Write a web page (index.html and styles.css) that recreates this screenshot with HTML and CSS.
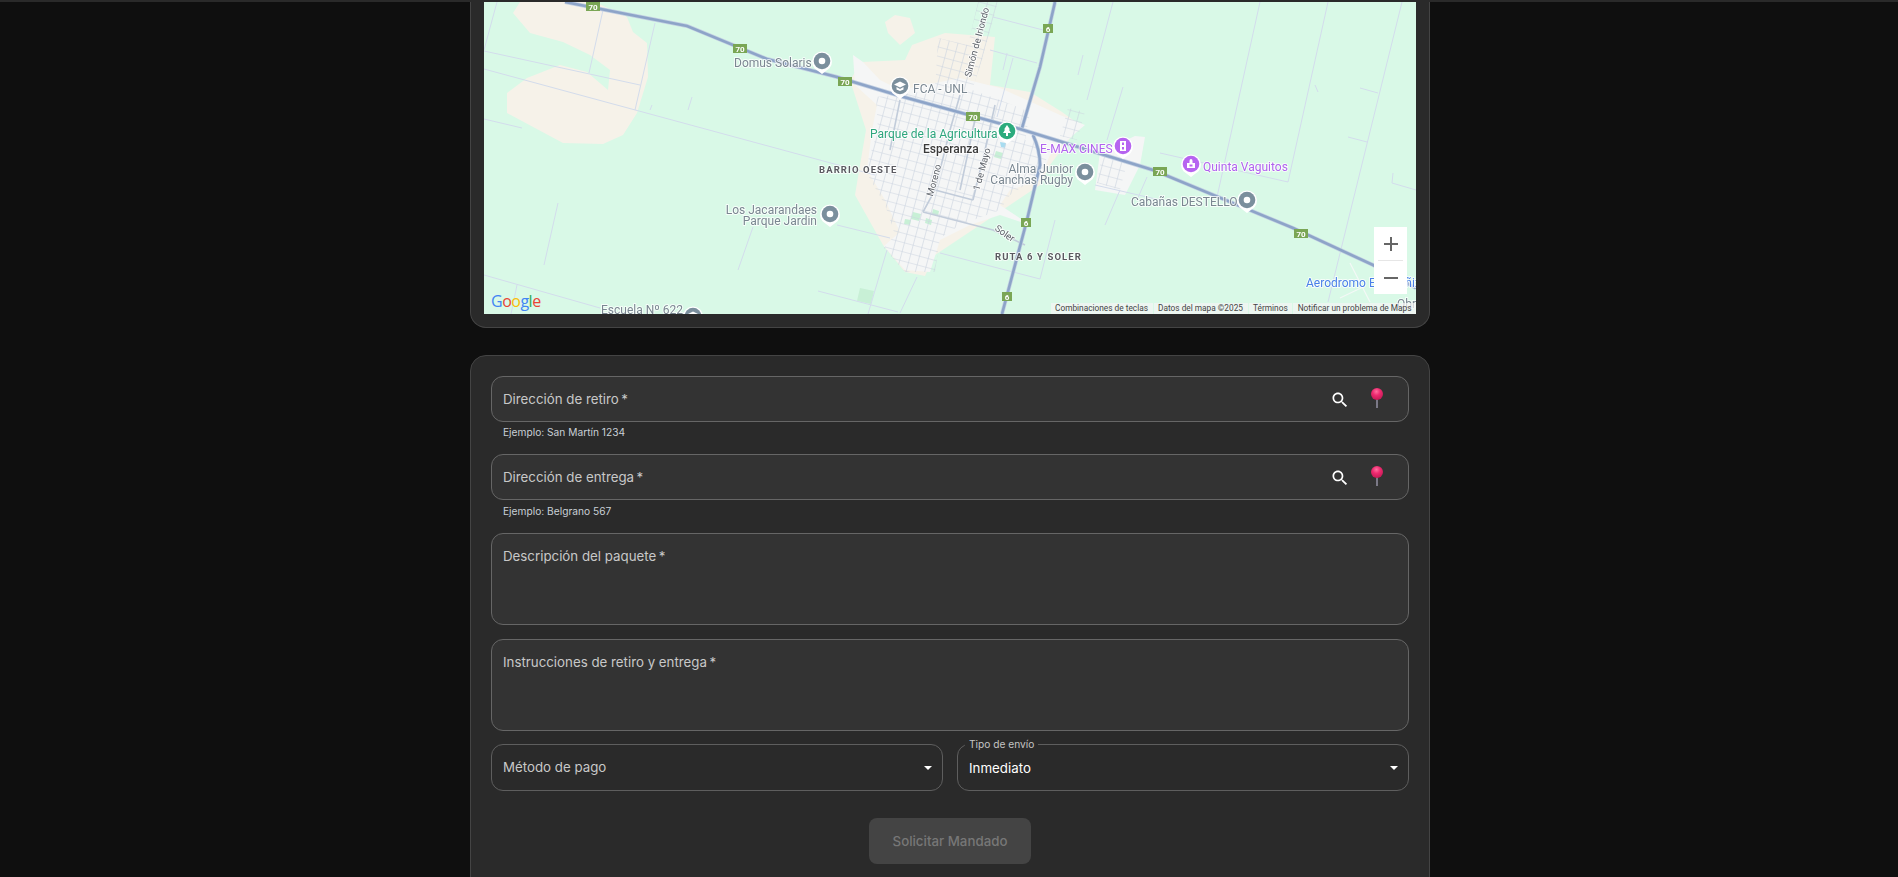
FILE: index.html
```html
<!DOCTYPE html>
<html lang="es">
<head>
    <meta charset="UTF-8">
    <title>Solicitar Mandado</title>
    <link rel="stylesheet" href="styles.css">
</head>
<body>
    <div class="top-line"></div>
    <main class="page">
        <!-- Mapa -->
        <section class="card map-card">
            <div class="map">
                <svg class="map-svg" viewBox="484 2 932 312" width="932" height="312">
                    <defs>
                        <pattern id="streets" width="9" height="9" patternUnits="userSpaceOnUse" patternTransform="rotate(15)">
                            <path d="M0 0H9M0 0V9" class="grid-line"/>
                        </pattern>
                        <symbol id="pin" viewBox="-11 -11 22 26" overflow="visible">
                            <path d="M0 13 L-7.5 7.2 A10 10 0 1 1 7.5 7.2 Z" fill="#fff"/>
                        </symbol>
                    </defs>

                    <!-- zonas -->
                    <path class="beige" d="M513,13 L520,2 L595,2 L627,17 L633,32 L647,43 L648,77 L637,113 L623,135 L603,144 L563,143 L507,113 L507,93 L527,78 L560,65 L587,72 L608,90 L610,70 L590,55 L563,42 L530,33 Z"/>
                    <path class="beige" d="M885,22 L895,15 L910,18 L915,33 L900,45 L888,33 Z"/>
                    <path class="beige" d="M850,80 L862,62 L905,60 L912,45 L945,33 L995,37 L990,85 L1030,92 L1062,112 L1080,125 L1050,165 L1040,185 L1010,205 L965,235 L935,255 L925,276 L905,272 L883,245 L855,195 L860,165 L866,130 Z"/>
                    <path class="urban" d="M853,55 L863,62 L880,80 L900,90 L960,78 L1000,88 L1060,115 L1085,125 L1050,155 L1040,180 L1010,190 L1000,205 L1030,225 L1000,215 L970,225 L940,240 L930,272 L905,270 L884,246 L900,232 L885,200 L867,170 L872,130 L877,105 L855,85 Z"/>
                    <path class="urban" d="M1100,152 L1135,136 L1145,137 L1140,165 L1125,195 L1095,190 Z"/>
                    <path class="park" d="M860,288 L874,291 L871,304 L857,301 Z"/>
                    <path class="park" d="M913,212 L921,214 L919,221 L911,219 Z M905,219 L911,220 L910,225 L904,224 Z M926,218 L932,220 L931,225 L925,223 Z M933,209 L939,211 L938,216 L932,214 Z M996,151 L1003,153 L1001,159 L994,157 Z"/>
                    <path class="water" d="M1000,142 L1006,143 L1005,148 L1001,147 Z"/>

                    <!-- caminos rurales -->
                    <path class="field" d="M497,2 L484,50 M484,51 L640,85 M603,10 L589,73 M655,23 L635,110 M484,69 L875,175 M484,119 L522,128 M558,203 L544,265 M484,275 L600,308 M517,285 L511,314 M753,227 L738,270 M837,225 L890,238 M887,250 L868,314 M818,291 L898,312 M917,277 L900,313 M692,97 L688,110 M652,105 L650,110 M1113,2 L1087,100 M1083,55 L1078,75 M1123,87 L1107,140 M1260,2 L1217,197 M1328,2 L1288,182 M1402,2 L1328,302 M1160,153 L1288,182 M1360,88 L1378,93 M1348,137 L1367,142 M1393,173 L1392,183 L1416,190 M1147,177 L1137,200 M993,17 L1043,30 M990,50 L1037,63 M1007,53 L1003,70 M1013,58 L997,117 M940,253 L1040,279 L1055,220 M1095,185 L1160,200 M1120,190 L1105,225 M1315,85 L1318,92"/>
                    <path class="field-white" d="M1350,263 L1370,302 M1340,298 L1363,287"/>

                    <!-- grilla de calles -->
                    <path class="grid" d="M876,97 L935,90 L938,38 L968,45 L978,2 L998,2 L982,60 L972,90 L1000,100 L1030,112 L1025,140 L1052,145 L1040,175 L1010,195 L1000,210 L960,225 L940,238 L935,272 L905,272 L884,248 L895,235 L885,205 L865,170 L878,130 Z"/>
                    <path class="grid" d="M1102,155 L1127,163 L1120,190 L1097,183 Z"/>
                    <path class="grid" d="M1068,108 L1085,112 L1077,140 L1060,136 Z"/>
                    <path class="street" d="M923,212 L935,190 L950,130 L960,95 M973,200 L985,150 L995,105 M960,190 L975,120 M923,212 L993,230 L1025,245 M935,190 L973,200 M900,100 L890,150"/>

                    <!-- rutas -->
                    <path class="road-edge" d="M1055,2 L1040,67 L1022,128"/>
                    <path class="road" d="M1055,2 L1040,67 L1022,128"/>
                    <path class="road-edge" d="M1033,135 Q1040,150 1040,165 L1027,220 L1002,314"/>
                    <path class="road" d="M1033,135 Q1040,150 1040,165 L1027,220 L1002,314"/>
                    <path class="road-edge" d="M565,2 L687,26 L767,59 L837,77 L900,96 L940,107 L1020,129 L1153,170 L1293,228 L1373,265 L1416,288"/>
                    <path class="road" d="M565,2 L687,26 L767,59 L837,77 L900,96 L940,107 L1020,129 L1153,170 L1293,228 L1373,265 L1416,288"/>

                    <!-- escudos -->
                    <g class="shield"><rect x="586" y="2" width="14" height="9"/><text x="593" y="9.5">70</text></g>
                    <g class="shield"><rect x="733" y="44" width="14" height="9"/><text x="740" y="51.5">70</text></g>
                    <g class="shield"><rect x="838" y="77" width="14" height="9"/><text x="845" y="84.5">70</text></g>
                    <g class="shield"><rect x="966" y="112" width="14" height="9"/><text x="973" y="119.5">70</text></g>
                    <g class="shield"><rect x="1153" y="167" width="14" height="9"/><text x="1160" y="174.5">70</text></g>
                    <g class="shield"><rect x="1294" y="229" width="14" height="9"/><text x="1301" y="236.5">70</text></g>
                    <g class="shield"><rect x="1043" y="24" width="10" height="9"/><text x="1048" y="31.5">6</text></g>
                    <g class="shield"><rect x="1021" y="218" width="10" height="9"/><text x="1026" y="225.5">6</text></g>
                    <g class="shield"><rect x="1002" y="292" width="10" height="9"/><text x="1007" y="299.5">6</text></g>

                    <!-- nombres -->
                    <text class="lbl gray" x="734" y="66.5">Domus Solaris</text>
                    <text class="lbl gray" x="913" y="92.5">FCA - UNL</text>
                    <text class="lbl green" x="870" y="137.5">Parque de la Agricultura</text>
                    <text class="lbl city" x="923" y="152.5">Esperanza</text>
                    <text class="lbl area" x="819" y="173">BARRIO OESTE</text>
                    <text class="lbl area" x="995" y="260">RUTA 6 Y SOLER</text>
                    <text class="lbl gray end" x="817" y="213.5">Los Jacarandaes</text>
                    <text class="lbl gray end" x="817" y="225">Parque Jardin</text>
                    <text class="lbl gray" x="601" y="314">Escuela Nº 622</text>
                    <text class="lbl purple" x="1040" y="153">E-MAX CINES</text>
                    <text class="lbl purple" x="1203" y="171">Quinta Vaguitos</text>
                    <text class="lbl gray end" x="1073" y="172.5">Alma Junior</text>
                    <text class="lbl gray end" x="1073" y="184">Canchas Rugby</text>
                    <text class="lbl gray" x="1131" y="205.5">Cabañas DESTELLO</text>
                    <text class="lbl blue" x="1306" y="287">Aerodromo Esperañiz</text>
                    <text class="lbl gray" x="1397" y="308">Obras</text>
                    <text class="lbl street-name" transform="translate(937,181) rotate(-75)">Moreno</text>
                    <text class="lbl street-name" transform="translate(985,170) rotate(-75)">1 de Mayo</text>
                    <text class="lbl street-name" transform="translate(980,43) rotate(-75)">Simón de Iriondo</text>
                    <text class="lbl street-name" transform="translate(1003,236) rotate(35)">Soler</text>

                    <!-- pines -->
                    <g transform="translate(822,61)"><use href="#pin" x="-11" y="-11" width="22" height="26"/><circle r="8.3" class="p-gray"/><circle r="3.3" fill="#fff"/></g>
                    <g transform="translate(900,86)"><use href="#pin" x="-11" y="-11" width="22" height="26"/><circle r="8.3" class="p-gray"/><path d="M0,-4.5 L6,-1.5 L0,1.5 L-6,-1.5 Z M-3.5,1 L0,3 L3.5,1 V3.5 L0,5 L-3.5,3.5 Z" fill="#fff"/></g>
                    <g transform="translate(1007,131)"><use href="#pin" x="-11" y="-11" width="22" height="26"/><circle r="8.3" class="p-green"/><path d="M0,-6 L3,-1.5 H1.8 L4,2 H1 V5 H-1 V2 H-4 L-1.8,-1.5 H-3 Z" fill="#fff"/></g>
                    <g transform="translate(1123,146)"><use href="#pin" x="-11" y="-11" width="22" height="26"/><circle r="8.3" class="p-purple"/><path d="M-3,-5 H3 V5 H-3 Z" fill="#fff"/><path d="M-1,-3.5 H1 V-1 H-1 Z M-1,1 H1 V3.5 H-1 Z" class="p-purple"/></g>
                    <g transform="translate(1191,164)"><use href="#pin" x="-11" y="-11" width="22" height="26"/><circle r="8.3" class="p-purple"/><path d="M-4,-1 H-1.5 V-3 A1.5,2 0 0 1 1.5,-3 V-1 H4 V4 H-4 Z M-1.5,0.5 V2.5 H1.5 V0.5 Z" fill="#fff" fill-rule="evenodd"/></g>
                    <g transform="translate(1085,172)"><use href="#pin" x="-11" y="-11" width="22" height="26"/><circle r="8.3" class="p-gray"/><circle r="3.3" fill="#fff"/></g>
                    <g transform="translate(1247,200)"><use href="#pin" x="-11" y="-11" width="22" height="26"/><circle r="8.3" class="p-gray"/><circle r="3.3" fill="#fff"/></g>
                    <g transform="translate(830,214)"><use href="#pin" x="-11" y="-11" width="22" height="26"/><circle r="8.3" class="p-gray"/><circle r="3.3" fill="#fff"/></g>
                    <g transform="translate(693,316)"><use href="#pin" x="-11" y="-11" width="22" height="26"/><circle r="8.3" class="p-gray"/><path d="M0,-4.5 L6,-1.5 L0,1.5 L-6,-1.5 Z" fill="#fff"/></g>
                </svg>

                <div class="google-logo"><span class="g-blue">G</span><span class="g-red">o</span><span class="g-yellow">o</span><span class="g-blue">g</span><span class="g-green">l</span><span class="g-red">e</span></div>

                <div class="zoom-control">
                    <button class="zoom-btn" type="button"><svg width="18" height="18" viewBox="0 0 18 18"><path d="M9 2V16M2 9H16"/></svg></button>
                    <div class="zoom-sep"></div>
                    <button class="zoom-btn" type="button"><svg width="18" height="18" viewBox="0 0 18 18"><path d="M2 9H16"/></svg></button>
                </div>

                <div class="map-footer">
                    <span>Combinaciones de teclas</span>
                    <span>Datos del mapa ©2025</span>
                    <span>Términos</span>
                    <span>Notificar un problema de Maps</span>
                </div>
            </div>
        </section>

        <!-- Formulario -->
        <section class="card form-card">
            <div class="field-box">
                <span class="field-label">Dirección de retiro&thinsp;*</span>
                <svg class="icon-search" width="20" height="20" viewBox="0 0 24 24"><path d="M15.5 14h-.79l-.28-.27C15.41 12.59 16 11.11 16 9.5 16 5.91 13.09 3 9.5 3S3 5.91 3 9.5 5.91 16 9.5 16c1.61 0 3.09-.59 4.23-1.57l.27.28v.79l5 4.99L20.49 19l-4.99-5zm-6 0C7.01 14 5 11.99 5 9.5S7.01 5 9.5 5 14 7.01 14 9.5 11.99 14 9.5 14z"/></svg>
                <svg class="icon-pin" width="16" height="20" viewBox="0 0 16 20"><use href="#pushpin"/></svg>
            </div>
            <p class="helper">Ejemplo: San Martín 1234</p>

            <div class="field-box">
                <span class="field-label">Dirección de entrega&thinsp;*</span>
                <svg class="icon-search" width="20" height="20" viewBox="0 0 24 24"><path d="M15.5 14h-.79l-.28-.27C15.41 12.59 16 11.11 16 9.5 16 5.91 13.09 3 9.5 3S3 5.91 3 9.5 5.91 16 9.5 16c1.61 0 3.09-.59 4.23-1.57l.27.28v.79l5 4.99L20.49 19l-4.99-5zm-6 0C7.01 14 5 11.99 5 9.5S7.01 5 9.5 5 14 7.01 14 9.5 11.99 14 9.5 14z"/></svg>
                <svg class="icon-pin" width="16" height="20" viewBox="0 0 16 20"><use href="#pushpin"/></svg>
            </div>
            <p class="helper helper-last">Ejemplo: Belgrano 567</p>

            <div class="field-box area-box">
                <span class="field-label">Descripción del paquete&thinsp;*</span>
            </div>
            <div class="field-box area-box">
                <span class="field-label">Instrucciones de retiro y entrega&thinsp;*</span>
            </div>

            <div class="select-row">
                <div class="select-box">
                    <span class="field-label">Método de pago</span>
                    <span class="arrow"></span>
                </div>
                <div class="select-box">
                    <span class="select-legend">Tipo de envío</span>
                    <span class="select-value">Inmediato</span>
                    <span class="arrow"></span>
                </div>
            </div>

            <div class="actions">
                <button class="submit" type="button" disabled>Solicitar Mandado</button>
            </div>
        </section>
    </main>

    <!-- chincheta compartida -->
    <svg width="0" height="0" class="defs">
        <defs>
            <radialGradient id="ball" cx="45%" cy="30%" r="70%">
                <stop offset="0" stop-color="#ff6f9f"/>
                <stop offset="0.45" stop-color="#ee2a70"/>
                <stop offset="1" stop-color="#c41a55"/>
            </radialGradient>
            <g id="pushpin">
                <rect x="7.2" y="10" width="1.6" height="10" fill="#8d8a9c"/>
                <circle cx="8" cy="6" r="6" fill="url(#ball)"/>
            </g>
        </defs>
    </svg>
</body>
</html>
```

FILE: styles.css
```css
* {
    box-sizing: border-box;
}
html, body {
    height: 877px;
    overflow: hidden;
}
body {
    margin: 0;
    padding-left: 2px;
    background-color: #0f0f0f;
    font-family: Inter, "Noto Sans", sans-serif;
    color: #fff;
}
.top-line {
    height: 2px;
    margin-left: -2px;
    background-color: #2a2a2a;
}
.page {
    width: 960px;
    margin: 0 auto;
}
.defs {
    position: absolute;
}

/* Cards */
.card {
    background-color: #2a2a2a;
    border: 1px solid #444;
}
.map-card {
    padding: 0 13px 13px;
    border-top: none;
    border-radius: 0 0 16px 16px;
}
.form-card {
    margin-top: 27px;
    padding: 20px 20px 30px;
    border-radius: 16px;
}

/* Map */
.map {
    position: relative;
    height: 312px;
    overflow: hidden;
    background-color: #d9f9e7;
}
.map-svg {
    display: block;
    filter: blur(0.35px);
    font-family: Roboto, sans-serif;
}
.beige { fill: #f6f2e9; }
.urban { fill: #f5f6f6; }
.park { fill: #c8f0d6; }
.water { fill: #a8dcf0; }
.field {
    fill: none;
    stroke: #d3dcec;
    stroke-width: 1;
}
.field-white {
    fill: none;
    stroke: #f4f8f6;
    stroke-width: 1.2;
}
.grid-line {
    fill: none;
    stroke: #cbd3e0;
    stroke-width: 1.2;
}
.grid { fill: url(#streets); }
.street {
    fill: none;
    stroke: #c2ccda;
    stroke-width: 1.6;
}
.road {
    fill: none;
    stroke: #8da4c8;
    stroke-width: 2.6;
}
.road-edge {
    fill: none;
    stroke: #c3d0e2;
    stroke-width: 4;
}
.shield rect { fill: #7aa655; }
.shield text {
    fill: #fff;
    font-size: 8px;
    font-weight: 700;
    text-anchor: middle;
}
.lbl {
    font-size: 12px;
    paint-order: stroke;
    stroke: rgba(255, 255, 255, 0.75);
    stroke-width: 2px;
    stroke-linejoin: round;
}
.end { text-anchor: end; }
.gray { fill: #7a8791; }
.green { fill: #2ea67e; }
.purple { fill: #b162ee; }
.blue { fill: #4a80e8; }
.city {
    fill: #3a3a3a;
    font-size: 12px;
    font-weight: 500;
}
.area {
    fill: #5a5a60;
    font-size: 9.5px;
    font-weight: 700;
    letter-spacing: 1.1px;
}
.street-name {
    fill: #5c6168;
    font-size: 9.5px;
    text-anchor: middle;
}
.p-gray { fill: #7b8f9d; }
.p-green { fill: #2bab7d; }
.p-purple { fill: #b664f0; }

.google-logo {
    position: absolute;
    left: 7px;
    bottom: 3px;
    font-family: "Open Sans", sans-serif;
    font-size: 16px;
    line-height: 20px;
    letter-spacing: -0.5px;
}
.g-blue { color: #4285f4; }
.g-red { color: #ea4335; }
.g-yellow { color: #fbbc05; }
.g-green { color: #34a853; }

.zoom-control {
    position: absolute;
    left: 890px;
    top: 225px;
    width: 33px;
    height: 67px;
    background-color: #fff;
}
.zoom-btn {
    display: flex;
    align-items: center;
    justify-content: center;
    width: 33px;
    height: 33px;
    padding: 0;
    border: none;
    background: none;
}
.zoom-btn svg path {
    fill: none;
    stroke: #666;
    stroke-width: 2;
}
.zoom-sep {
    height: 1px;
    margin: 0 4px;
    background-color: #e6e6e6;
}
.map-footer {
    position: absolute;
    right: 0;
    bottom: 0;
    display: flex;
    gap: 1px;
    font-family: Roboto, sans-serif;
    font-size: 8.3px;
    line-height: 11px;
    color: #444;
}
.map-footer span {
    padding: 0 4.5px;
    background-color: rgba(245, 245, 245, 0.7);
}

/* Form */
.field-box {
    display: flex;
    align-items: center;
    height: 46px;
    padding: 0 11px;
    background-color: #333;
    border: 1px solid #666;
    border-radius: 12px;
}
.field-label {
    flex: 1;
    margin-bottom: 1px;
    font-size: 13.3px;
    line-height: 20px;
    color: #c8c8c8;
}
.icon-search {
    margin-right: 19px;
    margin-top: 1px;
    fill: #fff;
}
.icon-pin {
    margin-right: 12px;
    margin-top: -2px;
}
.helper {
    margin: 4px 0 15px 12px;
    font-size: 10.2px;
    line-height: 13px;
    color: #c9d0d6;
}
.helper-last {
    margin-top: 5px;
}
.area-box {
    align-items: flex-start;
    height: 92px;
    padding-top: 12px;
    margin-bottom: 14px;
}
.select-row {
    display: flex;
    gap: 14px;
    margin-top: -1px;
}
.select-box {
    position: relative;
    flex: 1;
    display: flex;
    align-items: center;
    height: 47px;
    padding: 0 11px;
    border: 1px solid #5e5e5e;
    border-radius: 12px;
}
.select-box .field-label {
    margin-bottom: 2px;
}
.select-legend {
    position: absolute;
    left: 7px;
    top: -7px;
    padding: 0 4px;
    background-color: #2a2a2a;
    font-size: 10.2px;
    line-height: 13px;
    color: #c4c4c4;
}
.select-value {
    flex: 1;
    font-size: 13.3px;
    color: #fff;
}
.arrow {
    width: 0;
    height: 0;
    margin-right: -1px;
    border-left: 4px solid transparent;
    border-right: 4px solid transparent;
    border-top: 4.5px solid #fff;
}
.actions {
    display: flex;
    justify-content: center;
    margin-top: 27px;
}
.submit {
    width: 162px;
    height: 46px;
    border: none;
    border-radius: 8px;
    background-color: #444;
    color: #777;
    font-family: Inter, sans-serif;
    font-size: 13.3px;
    font-weight: 500;
}
```
